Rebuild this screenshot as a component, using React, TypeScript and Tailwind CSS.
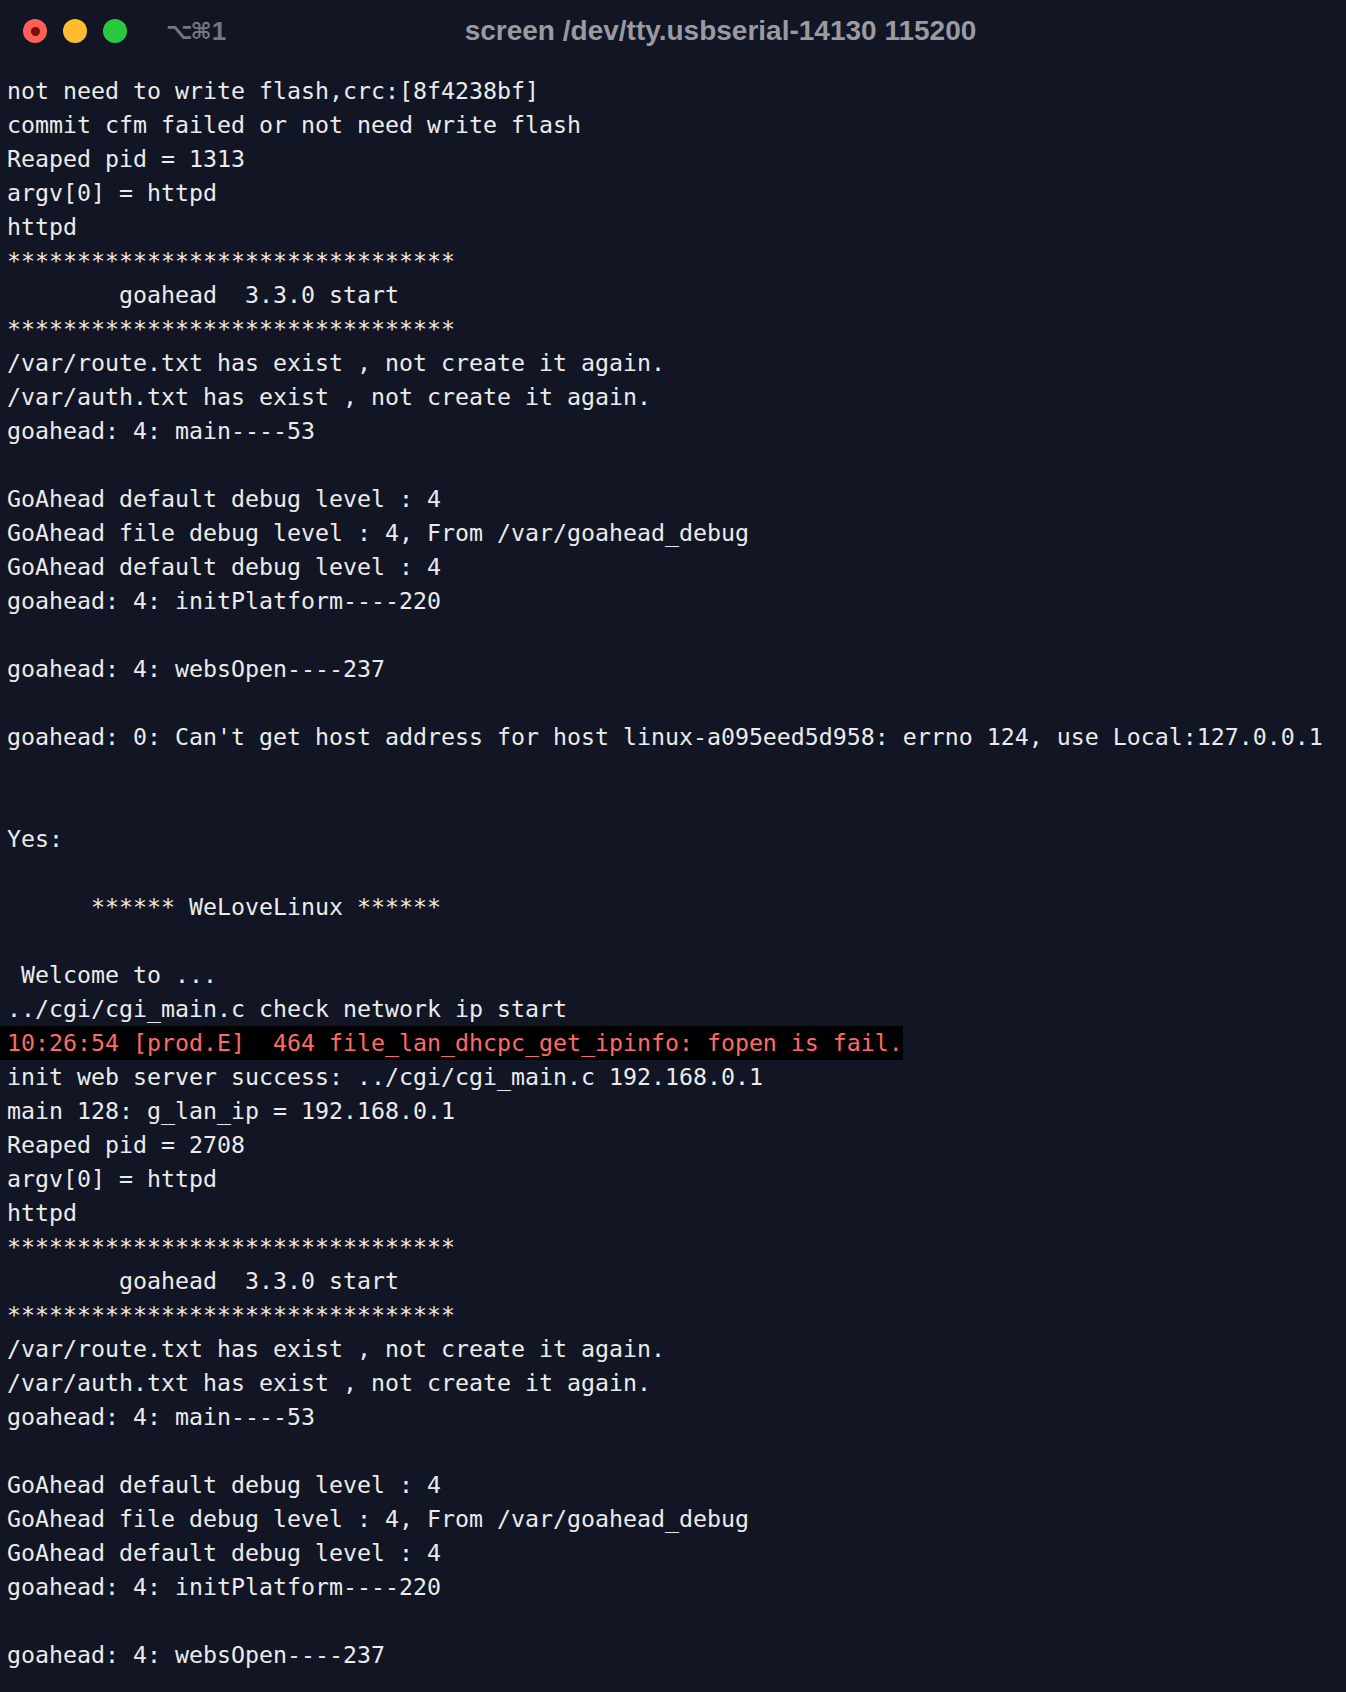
import React from 'react';

type Line = { text: string; error?: boolean };

const stars = '********************************';

const bootBlock: string[] = [
  'argv[0] = httpd',
  'httpd',
  stars,
  '        goahead  3.3.0 start',
  stars,
  '/var/route.txt has exist , not create it again.',
  '/var/auth.txt has exist , not create it again.',
  'goahead: 4: main----53',
  '',
  'GoAhead default debug level : 4',
  'GoAhead file debug level : 4, From /var/goahead_debug',
  'GoAhead default debug level : 4',
  'goahead: 4: initPlatform----220',
  '',
  'goahead: 4: websOpen----237',
];

const lines: Line[] = [
  { text: 'not need to write flash,crc:[8f4238bf]' },
  { text: 'commit cfm failed or not need write flash' },
  { text: 'Reaped pid = 1313' },
  ...bootBlock.map((t) => ({ text: t })),
  { text: '' },
  { text: "goahead: 0: Can't get host address for host linux-a095eed5d958: errno 124, use Local:127.0.0.1" },
  { text: '' },
  { text: '' },
  { text: 'Yes:' },
  { text: '' },
  { text: '      ****** WeLoveLinux ******' },
  { text: '' },
  { text: ' Welcome to ...' },
  { text: '../cgi/cgi_main.c check network ip start' },
  { text: '10:26:54 [prod.E]  464 file_lan_dhcpc_get_ipinfo: fopen is fail.', error: true },
  { text: 'init web server success: ../cgi/cgi_main.c 192.168.0.1' },
  { text: 'main 128: g_lan_ip = 192.168.0.1' },
  { text: 'Reaped pid = 2708' },
  ...bootBlock.map((t) => ({ text: t })),
];

const TitleBar: React.FC = () => (
  <div className="grid grid-cols-[1fr_auto_1fr] items-center h-[62px]">
    <div className="flex items-center pl-[23px]">
      <div className="w-6 h-6 rounded-full bg-[#fe5f57] flex items-center justify-center">
        <div className="w-[9px] h-[9px] rounded-full bg-[#7e0a0a]"></div>
      </div>
      <div className="w-6 h-6 rounded-full bg-[#febc2e] ml-4"></div>
      <div className="w-6 h-6 rounded-full bg-[#28c840] ml-4"></div>
      <span className="ml-[39px] flex items-center text-[#74767d] font-bold">
        <span className="text-[23px] tracking-[-2px] font-['DejaVu_Sans',sans-serif]">⌥⌘</span>
        <span className="text-[26px] ml-[2px] font-['Liberation_Sans',Arial,sans-serif]">1</span>
      </span>
    </div>
    <div className="pl-[95px] text-[28px] font-bold text-[#9a9ba1] font-['Liberation_Sans',Arial,sans-serif]">
      screen /dev/tty.usbserial-14130 115200
    </div>
    <div></div>
  </div>
);

const App: React.FC = () => {
  return (
    <div className="min-h-[1692px] w-full bg-[#121524] overflow-hidden">
      <TitleBar />
      <div className="pt-3 font-['DejaVu_Sans_Mono',monospace] text-[23.25px] leading-[34px] text-[#ebebeb]">
        {lines.map((line, index) => (
          <div key={index} className="h-[34px] whitespace-pre">
            {line.error ? (
              <span className="inline-block bg-black text-[#ff6b63] pl-[7px]">{line.text}</span>
            ) : (
              <span className="pl-[7px]">{line.text}</span>
            )}
          </div>
        ))}
      </div>
    </div>
  );
};

export default App;
